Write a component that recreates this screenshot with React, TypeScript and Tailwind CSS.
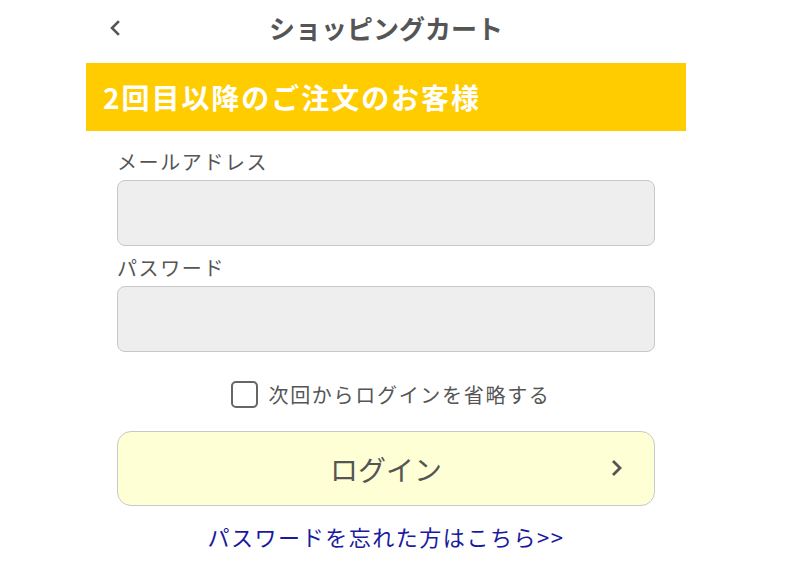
export default function App() {
  return (
    <div className="min-h-[583px] bg-white font-['Noto_Sans_CJK_JP','Noto_Sans',sans-serif] text-[#555]">
      <div className="ml-[86px] w-[600px]">
        <header className="relative flex h-[55px] items-center justify-center">
          <svg
            className="absolute left-[21px] top-[20px] h-[16px] w-[16px]"
            viewBox="0 0 16 16"
            fill="none"
            stroke="#555"
            strokeWidth="2.6"
            strokeLinecap="square"
          >
            <path d="M11 2L5 8l6 6" />
          </svg>
          <h1 className="text-[26px] font-bold leading-none text-[#555]">ショッピングカート</h1>
        </header>

        <div className="mt-[8px] flex h-[68px] items-center bg-[#ffcc00] px-[17px]">
          <h2 className="text-[28px] font-bold leading-none tracking-[0.07em] text-white">2回目以降のご注文のお客様</h2>
        </div>

        <div className="px-[31px] pt-[19px]">
          <label className="block text-[20px] leading-[24px] tracking-[0.08em] text-[#555]">メールアドレス</label>
          <input
            type="email"
            className="mt-[6px] block h-[66px] w-full rounded-[8px] border border-[#c8c8c8] bg-[#eeeeee] px-3"
          />
          <label className="mt-[10px] block text-[20px] leading-[24px] tracking-[0.08em] text-[#555]">パスワード</label>
          <input
            type="password"
            className="mt-[6px] block h-[66px] w-full rounded-[8px] border border-[#c8c8c8] bg-[#eeeeee] px-3"
          />

          <div className="mt-[29px] flex items-center justify-center gap-[10px] pl-[10px]">
            <span className="block h-[27px] w-[27px] rounded-[5px] border-2 border-[#666] bg-white" />
            <span className="text-[20px] leading-none tracking-[0.085em] text-[#555]">次回からログインを省略する</span>
          </div>

          <button className="relative mt-[23px] flex h-[75px] w-full items-center justify-center rounded-[14px] border border-[#c8c8c8] bg-[#ffffd5]">
            <span className="text-[28px] leading-none text-[#555]">ログイン</span>
            <svg
              className="absolute right-[30px] top-[27px] h-[18px] w-[14px]"
              viewBox="0 0 14 18"
              fill="none"
              stroke="#555"
              strokeWidth="2.8"
              strokeLinecap="square"
            >
              <path d="M4 3l6 6-6 6" />
            </svg>
          </button>

          <div className="mt-[19px] text-center">
            <a className="text-[22px] leading-none tracking-[0.07em] text-[#1a1aa0]">パスワードを忘れた方はこちら&gt;&gt;</a>
          </div>
        </div>
      </div>
    </div>
  );
}
